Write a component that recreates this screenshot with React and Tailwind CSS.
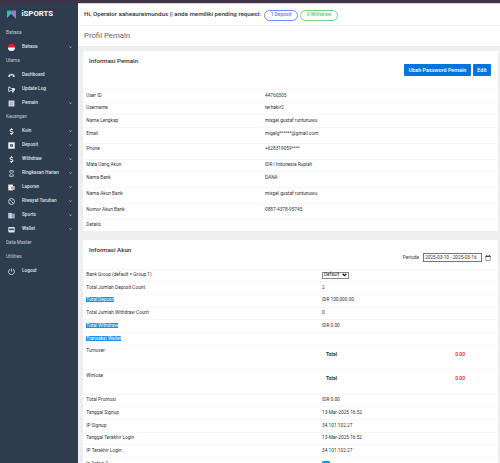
import React from "react";
import { FaBullhorn, FaDollarSign } from "react-icons/fa";

const svgProps = { viewBox: "0 0 24 24", className: "block h-[7px] w-[7px]", fill: "currentColor" };

const icons = {
    flag: (
        <svg {...svgProps}>
            <path d="M0 12a12 12 0 0 1 24 0z" fill="#e0202c" />
            <path d="M0 12a12 12 0 0 0 24 0z" fill="#ffffff" />
        </svg>
    ),
    gauge: (
        <svg {...svgProps}>
            <path d="M1 17a11 11 0 0 1 22 0h-6a5 5 0 0 0-10 0z" />
            <path d="M12 17 7 6M12 17l6-9" stroke="#2e3d4e" strokeWidth="1.5" />
        </svg>
    ),
    bullhorn: <FaBullhorn className="block h-[7px] w-[7px] -scale-x-100" />,
    table: (
        <svg {...svgProps}>
            <path d="M2 2h20v20H2z" />
            <path d="M2 9h20M2 15h20M9 2v20M15 2v20" stroke="#8796a3" strokeWidth="1.5" />
        </svg>
    ),
    dollar: <FaDollarSign className="block h-[7px] w-[7px]" />,
    deposit: (
        <svg {...svgProps}>
            <path d="M1 1h22v22H1z" fill="#f2f5f7" />
            <path d="M7 8h10v8H7z" fill="#2e3d4e" />
            <path d="M11 11h3v3h-3z" />
        </svg>
    ),
    hourglass: (
        <svg {...svgProps} fill="none" stroke="currentColor" strokeWidth="2.8">
            <path d="M6 2.5h12v5L13.5 12l4.5 4.5v5H6v-5l4.5-4.5L6 7.5z" />
        </svg>
    ),
    report: (
        <svg {...svgProps}>
            <path d="M1 2h16v20H1z" fill="#f2f5f7" />
            <path d="M13 7h10v13H13z" fill="#b8c2d0" />
            <path d="M10 11h6v6h-6z" fill="#b6945f" />
        </svg>
    ),
    clock: (
        <svg {...svgProps} fill="none" stroke="currentColor" strokeWidth="3">
            <circle cx="12" cy="12" r="10" />
            <path d="m7 6 5 6 5 5" />
        </svg>
    ),
    building: (
        <svg {...svgProps}>
            <path d="M1 3h12v19H1z" />
            <path d="M13 6h10v16H13z" fill="#9fb0d8" />
            <path d="M13 11h9M13 16h9M6 3v18" stroke="#60718c" strokeWidth="1.2" />
        </svg>
    ),
    wallet: (
        <svg {...svgProps}>
            <rect x="1" y="3" width="22" height="19" rx="3" />
            <path d="M4 9h16v5H4z" fill="#2e3d4e" />
        </svg>
    ),
    power: (
        <svg {...svgProps} fill="none" stroke="currentColor" strokeWidth="3">
            <path d="M7 4a10 10 0 1 0 10 0M12 2v10" />
        </svg>
    ),
};

const menu = [
    { heading: "Bahasa" },
    { icon: "flag", label: "Bahasa", arrow: true },
    { heading: "Utama" },
    { icon: "gauge", label: "Dashboard" },
    { icon: "bullhorn", label: "Update Log" },
    { icon: "table", label: "Pemain", arrow: true },
    { heading: "Keuangan" },
    { icon: "dollar", label: "Koin", arrow: true },
    { icon: "deposit", label: "Deposit", arrow: true },
    { icon: "dollar", label: "Withdraw", arrow: true },
    { icon: "hourglass", label: "Ringkasan Harian", arrow: true },
    { icon: "report", label: "Laporan", arrow: true },
    { icon: "clock", label: "Riwayat Taruhan", arrow: true },
    { icon: "building", label: "Sports", arrow: true },
    { icon: "wallet", label: "Wallet", arrow: true },
    { heading: "Data Master" },
    { heading: "Utilities" },
    { icon: "power", label: "Logout" },
];

const playerRows = [
    ["User ID", "44760305", "h-[12.7px]"],
    ["Username", "terhakir2", "h-[12.7px]"],
    ["Name Lengkap", "mixgel gustaf runtunuwu", "h-[12.6px]"],
    ["Email", "migelg******@gmail.com", "h-[15.8px]"],
    ["Phone", "+628319059****", "h-[15.9px]"],
    ["Mata Uang Akun", "IDR | Indonesia Rupiah", "h-[12.6px]"],
    ["Nama Bank", "DANA", "h-[15.9px]"],
    ["Nama Akun Bank", "mixgel gustaf runtunuwu", "h-[15.8px]"],
    ["Nomor Akun Bank", "0887-4378-95745", "h-[15.6px]"],
    ["Details", "", "h-[12.4px]"],
];

const accountRows = [
    { label: "Bank Group (default = Group 1)", kind: "select" },
    { label: "Total Jumlah Deposit Count", value: "2" },
    { label: "Total Deposit", value: "IDR 100,000.00", marked: true },
    { label: "Total Jumlah Withdraw Count", value: "0" },
    { label: "Total Withdraw", value: "IDR 0.00", marked: true },
    { label: "Transaksi Wallet", value: "", marked: true },
    { label: "Turnover", kind: "total" },
    { label: "Winlose", kind: "total" },
    { label: "Total Promosi", value: "IDR 0.00" },
    { label: "Tanggal Signup", value: "13-Mar-2025 16:52" },
    { label: "IP Signup", value: "34.101.102.27" },
    { label: "Tanggal Terakhir Login", value: "13-Mar-2025 16:52" },
    { label: "IP Terakhir Login", value: "34.101.102.27" },
    { label: "Is Active ?", kind: "check" },
];

function Chevron({ className }) {
    return (
        <svg viewBox="0 0 8 6" className={className} fill="none" stroke="currentColor" strokeWidth="1.8">
            <path d="m1 1 3 3 3-3" />
        </svg>
    );
}

function Sidebar() {
    return (
        <aside className="w-[77.5px] shrink-0 bg-[#2e3d4e] text-[#dce2e7]">
            <div className="flex h-[22.5px] items-center pl-[7px]">
                <svg viewBox="0 0 24 24" className="h-[9px] w-[9px]">
                    <path d="M0 1h11l3 8L0 21z" fill="#20c6b0" />
                    <path d="M24 1H14l-4 9 14 13z" fill="#9b7bd2" />
                    <path d="m0 23 11-13 9 13z" fill="#26344a" />
                </svg>
                <span className="ml-[5.5px] text-[7.8px] font-bold leading-none text-white">iSPORTS</span>
            </div>
            {menu.map((item, i) =>
                item.heading ? (
                    <div key={i} className="flex h-[14px] items-center pl-[6px] pt-[1px] text-[4.7px] text-[#c3cbd2]">
                        {item.heading}
                    </div>
                ) : (
                    <div key={i} className="flex h-[14px] items-center pl-[7px] pr-[5.5px] pt-[1px]">
                        <span className="flex w-[8px] justify-center">{icons[item.icon]}</span>
                        <span className="ml-[7px] flex-1 text-[4.7px] font-medium">{item.label}</span>
                        {item.arrow && <Chevron className="h-[2.5px] w-[3px]" />}
                    </div>
                )
            )}
        </aside>
    );
}

function AccountValue({ row }) {
    if (row.kind === "select") {
        return (
            <div className="-mt-[0.5px] flex h-[7px] w-[27px] items-center justify-between border border-[#888] bg-white px-[1px]">
                <span>Default</span>
                <Chevron className="h-[4px] w-[5px] text-black" />
            </div>
        );
    }
    if (row.kind === "total") {
        return (
            <div className="flex justify-between pt-[2.5px] pl-[4px] pr-[7px] text-[4.9px] font-bold">
                <span>Total</span>
                <span className="text-[#f5304a]">0.00</span>
            </div>
        );
    }
    if (row.kind === "check") {
        return <div className="mt-[0.5px] h-[8px] w-[8px] rounded-[1px] bg-[#109cf1]" />;
    }
    return <span>{row.value}</span>;
}

export default function App() {
    return (
        <div className="flex h-[463px] w-[500px] flex-col overflow-hidden whitespace-nowrap bg-[#eeeeee] font-['Roboto',sans-serif] text-[#333]">
            <div className="h-[3px] shrink-0 bg-[#403349]" />
            <div className="flex min-h-0 flex-1">
                <Sidebar />
                <main className="flex min-w-0 flex-1 flex-col">
                    <header className="flex h-[23px] shrink-0 items-center border-b border-t border-b-[#f4f4f4] border-t-[#d8d5da] bg-white pl-[6.5px] pt-[1px]">
                        <span className="w-[180px] text-[6.2px] font-medium">
                            Hi, Operator aaheauraimundus || anda memiliki pending request:
                        </span>
                        <span className="flex h-[11px] w-[34px] items-center justify-center rounded-full border border-[#7487ff] text-[4.9px] font-medium text-[#5f75fa]">
                            1 Deposit
                        </span>
                        <span className="ml-[2px] flex h-[11px] w-[38px] items-center justify-center rounded-full border border-[#73d38a] text-[4.9px] font-medium text-[#60c978]">
                            0 Withdraw
                        </span>
                    </header>
                    <div className="flex h-[20px] shrink-0 items-center bg-white pl-[6.5px] text-[7.75px] text-[#666]">
                        Profil Pemain
                    </div>

                    {/* Player information */}
                    <section className="ml-[5.5px] mt-[5px] h-[180px] w-[415px] shrink-0 overflow-hidden bg-white text-[4.75px] leading-[6px]">
                        <div className="flex h-[38px] justify-between pl-[6px] pr-[7px]">
                            <h2 className="pt-[5.5px] text-[6.2px] font-medium leading-[8px]">Informasi Pemain</h2>
                            <div className="flex gap-[2px] pt-[13px] text-[5.45px] font-medium text-white">
                                <button className="h-[12px] w-[67px] rounded-[1px] bg-[#0275d8]">Ubah Password Pemain</button>
                                <button className="h-[12px] w-[18px] rounded-[1px] bg-[#0275d8]">Edit</button>
                            </div>
                        </div>
                        {playerRows.map(([label, value, height]) => (
                            <div key={label} className={`flex border-t border-[#f7f7f7] pl-[3.3px] pt-[2.7px] ${height}`}>
                                <span className="w-[178.7px]">{label}</span>
                                <span>{value}</span>
                            </div>
                        ))}
                    </section>

                    {/* Account information */}
                    <section className="ml-[5.5px] mt-[9px] h-[240px] w-[415px] shrink-0 bg-white text-[4.75px] leading-[6px]">
                        <div className="flex h-[28.5px] justify-between pl-[6px] pr-[7px]">
                            <h2 className="pt-[5.5px] text-[6.2px] font-medium leading-[8px]">Informasi Akun</h2>
                            <div className="mt-[13px] flex h-[9px] items-center">
                                <span>Periode</span>
                                <span className="ml-[4px] flex h-[9px] w-[59px] items-center border border-[#777] pl-[1px]">
                                    2025-03-10 - 2025-03-16
                                </span>
                                <svg viewBox="0 0 12 12" className="ml-[3px] h-[6px] w-[6px]" fill="none" stroke="#444b60">
                                    <path d="M1.5 2h9v9h-9z" />
                                    <path d="M1 3h10M3 0v3M9 0v3" strokeWidth="2" />
                                </svg>
                            </div>
                        </div>
                        {accountRows.map((row) => (
                            <div
                                key={row.label}
                                className={`flex border-t border-[#f7f7f7] pl-[3.3px] pt-[2.6px] ${
                                    row.kind === "total" ? "h-[24.5px]" : "h-[12.7px]"
                                }`}
                            >
                                <div className="w-[235.7px]">
                                    <span className={row.marked ? "bg-[#168fee] text-white" : ""}>{row.label}</span>
                                </div>
                                <div className="w-[150px]">
                                    <AccountValue row={row} />
                                </div>
                            </div>
                        ))}
                    </section>
                </main>
            </div>
        </div>
    );
}
